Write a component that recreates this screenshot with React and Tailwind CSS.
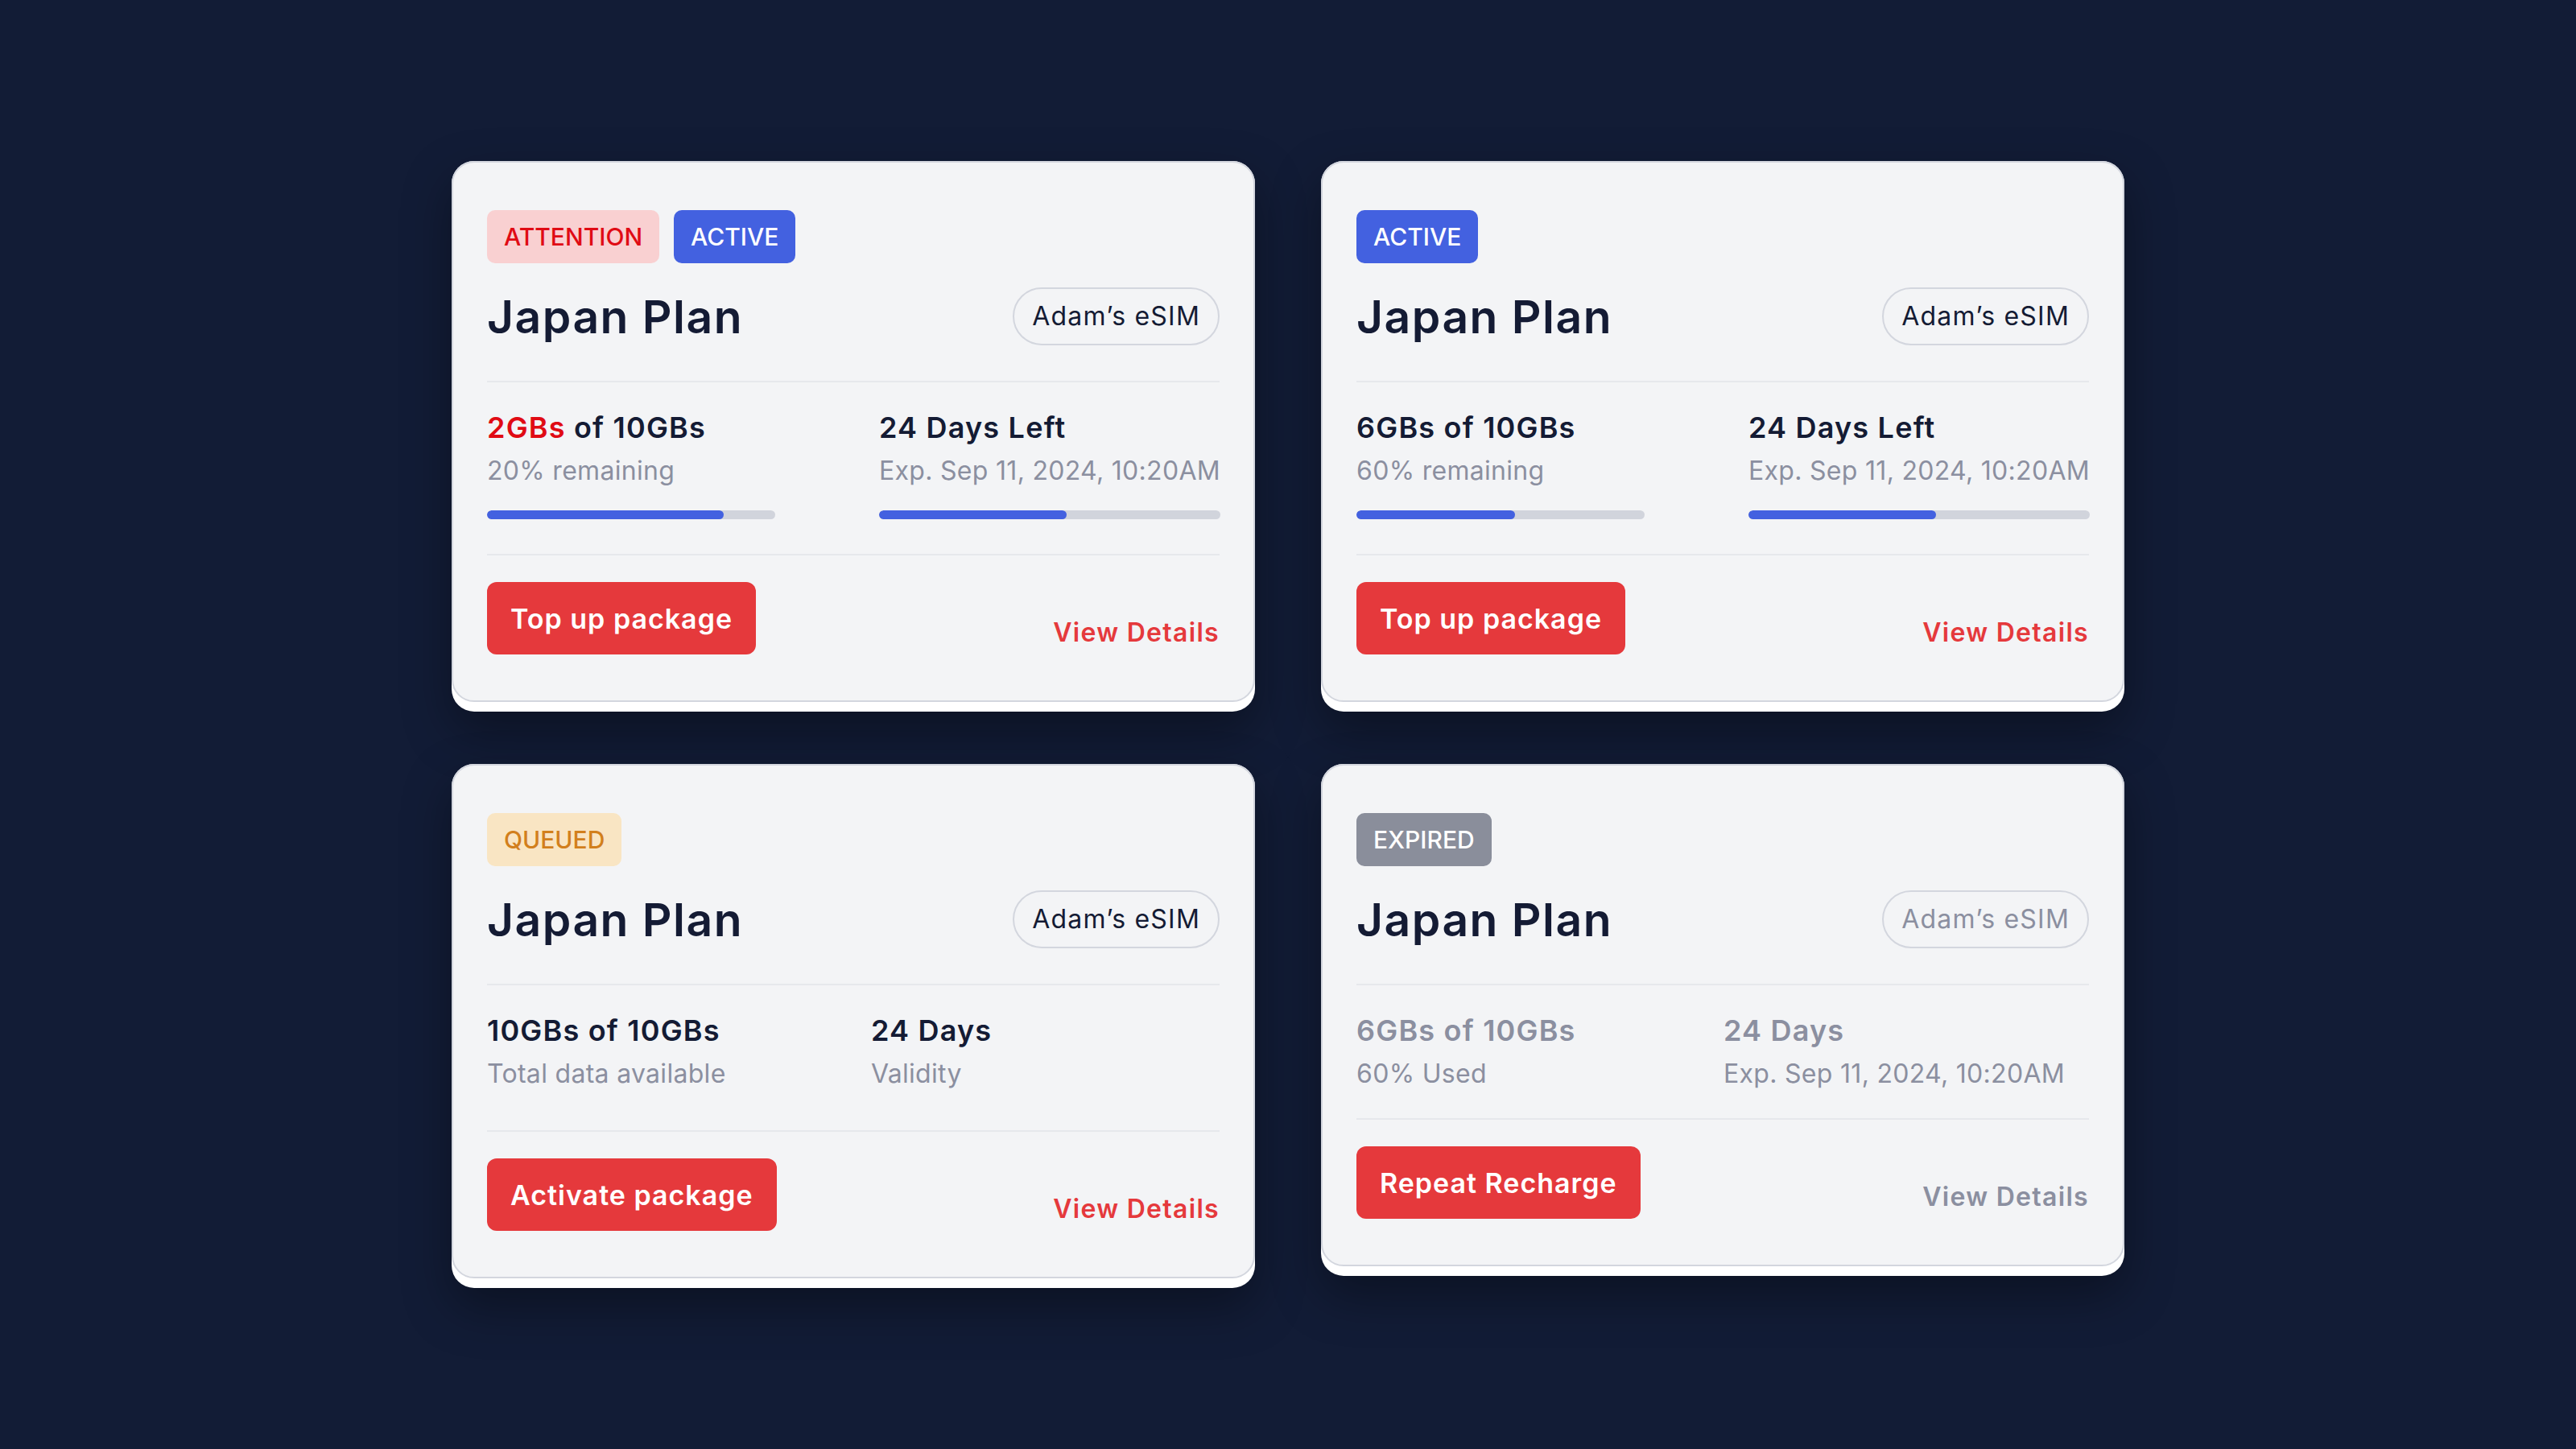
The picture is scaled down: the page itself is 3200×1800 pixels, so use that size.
const FONT = { fontFamily: 'Inter, "Noto Sans", sans-serif' };

const BADGE_STYLE = {
  ATTENTION: 'bg-[#f9d0d1] text-[#e00b14]',
  ACTIVE: 'bg-[#4361e0] text-white',
  QUEUED: 'bg-[#f9e5c3] text-[#d27f1c]',
  EXPIRED: 'bg-[#8a8e9b] text-white',
};

const CARDS = [
  {
    badges: ['ATTENTION', 'ACTIVE'],
    colWidth: 'w-[487px]',
    statsPb: 'pb-[43px]',
    left: { head: <><span className="text-[#e00b14]">2GBs</span> of 10GBs</>, sub: '20% remaining', bar: 82 },
    right: { head: '24 Days Left', sub: 'Exp. Sep 11, 2024, 10:20AM', bar: 55 },
    action: 'Top up package',
  },
  {
    badges: ['ACTIVE'],
    colWidth: 'w-[487px]',
    statsPb: 'pb-[43px]',
    left: { head: '6GBs of 10GBs', sub: '60% remaining', bar: 55 },
    right: { head: '24 Days Left', sub: 'Exp. Sep 11, 2024, 10:20AM', bar: 55 },
    action: 'Top up package',
  },
  {
    badges: ['QUEUED'],
    colWidth: 'w-[477px]',
    statsPb: 'pb-[50px]',
    left: { head: '10GBs of 10GBs', sub: 'Total data available' },
    right: { head: '24 Days', sub: 'Validity' },
    action: 'Activate package',
  },
  {
    badges: ['EXPIRED'],
    colWidth: 'w-[456px]',
    statsPb: 'pb-[35px]',
    muted: true,
    left: { head: '6GBs of 10GBs', sub: '60% Used' },
    right: { head: '24 Days', sub: 'Exp. Sep 11, 2024, 10:20AM' },
    action: 'Repeat Recharge',
  },
];

function Bar({ pct, className }) {
  return (
    <div className={`mt-[29px] h-[11px] rounded-full bg-[#d1d4dc] overflow-hidden ${className}`}>
      <div className="h-full rounded-full bg-[#4361e0]" style={{ width: `${pct}%` }} />
    </div>
  );
}

function Stat({ item, muted, barClass }) {
  return (
    <div className="flex flex-col">
      <span className={`whitespace-nowrap text-[36px] leading-[44px] font-semibold tracking-[1.2px] ${muted ? 'text-[#8b8fa0]' : 'text-[#141b34]'}`}>
        {item.head}
      </span>
      <span className="mt-[12px] whitespace-nowrap text-[32px] leading-[40px] tracking-[0.3px] text-[#8b8fa0]">{item.sub}</span>
      {item.bar != null && <Bar pct={item.bar} className={barClass} />}
    </div>
  );
}

function PlanCard({ card }) {
  return (
    <div className="w-[998px] rounded-[28px] bg-white pb-[12px] shadow-[0_24px_60px_rgba(0,0,0,0.35)]">
      <div className="rounded-[28px] bg-[#f3f4f6] border-2 border-[#d3d6de] px-[42px] pt-[59px] pb-[57px]">
        <div className="flex gap-[18px]">
          {card.badges.map((b) => (
            <span
              key={b}
              className={`h-[66px] px-[21px] flex items-center rounded-[10px] text-[30px] font-medium ${BADGE_STYLE[b]}`}
            >
              {b}
            </span>
          ))}
        </div>

        <div className="mt-[30px] flex items-center justify-between">
          <h2 className="text-[57px] leading-none font-semibold text-[#141b34] tracking-[1.5px]">Japan Plan</h2>
          <span
            className={`h-[72px] px-[22px] flex items-center rounded-full border-2 border-[#d3d6de] text-[32px] tracking-[1.2px] ${card.muted ? 'text-[#8b8fa0]' : 'text-[#141b34]'}`}
          >
            Adam’s eSIM
          </span>
        </div>

        <div className="mt-[44px] h-[2px] bg-[#e6e8ec]" />

        <div className={`flex pt-[34px] ${card.statsPb}`}>
          <div className={`${card.colWidth} shrink-0`}>
            <Stat item={card.left} muted={card.muted} barClass="w-[358px]" />
          </div>
          <div className="flex-1">
            <Stat item={card.right} muted={card.muted} barClass="w-full" />
          </div>
        </div>

        <div className="h-[2px] bg-[#e6e8ec]" />

        <div className="pt-[33px] flex items-end justify-between">
          <button className="h-[90px] px-[29px] flex items-center rounded-[12px] bg-[#e5393c] text-white text-[34px] font-semibold tracking-[1px]">
            {card.action}
          </button>
          <span
            className={`mb-[11px] text-[32px] leading-[32px] font-semibold tracking-[1.3px] ${card.muted ? 'text-[#8b8fa0]' : 'text-[#e5393c]'}`}
          >
            View Details
          </span>
        </div>
      </div>
    </div>
  );
}

export default function App() {
  return (
    <div className="min-h-screen bg-[#121c36] flex items-center justify-center" style={FONT}>
      <div className="grid grid-cols-[998px_998px] gap-x-[82px] gap-y-[65px] items-start">
        {CARDS.map((c, i) => (
          <PlanCard key={i} card={c} />
        ))}
      </div>
    </div>
  );
}
